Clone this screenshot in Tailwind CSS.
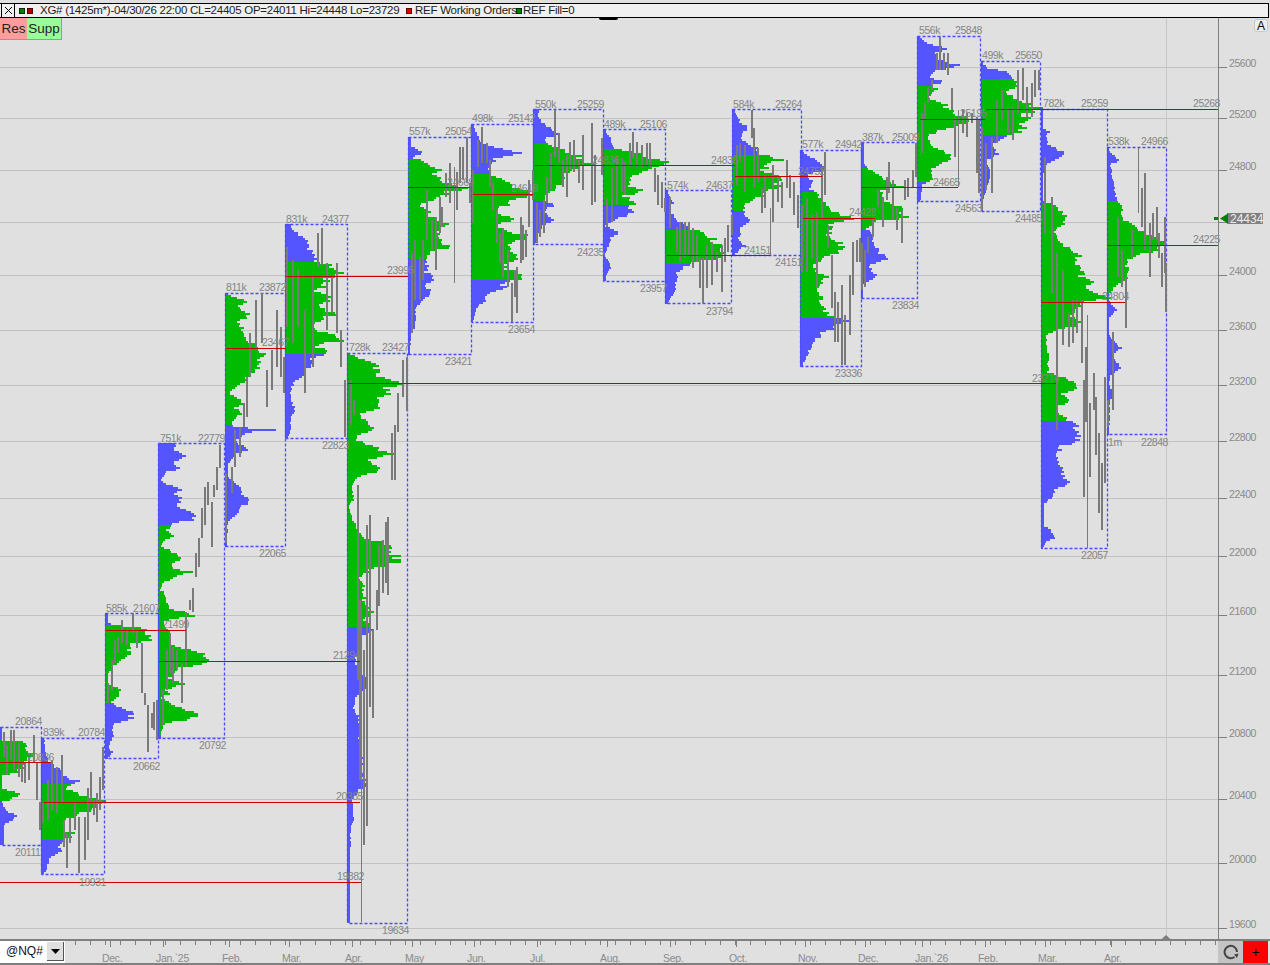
<!DOCTYPE html>
<html lang="en">
<head>
<meta charset="UTF-8">
<title>XG# chart</title>
<script src="https://cdn.jsdelivr.net/npm/@tailwindcss/browser@4"></script>
</head>
<body class="bg-[#e0e0e0] font-['Liberation_Sans',sans-serif]">
<div class="relative w-[1270px] h-[965px] overflow-hidden flex flex-col">

  <!-- title bar -->
  <div class="shrink-0 mt-[3px] h-[15px] mr-px flex items-center border-y border-r border-black bg-[#f0f0f0] text-[11.5px] leading-none text-[#222] tracking-[-0.26px] whitespace-nowrap">
    <div class="ml-px w-[14px] h-full border-x border-black flex items-center justify-center">
      <svg viewBox="0 0 9 9" class="w-[9px] h-[9px] stroke-black fill-none"><path d="M1 1L8 8M8 1L1 8"/></svg>
    </div>
    <span class="ml-[4px] w-[6px] h-[6px] bg-[#008000] border border-[#003000]"></span>
    <span class="ml-[2px] w-[6px] h-[6px] bg-[#b00000] border border-[#500000]"></span>
    <span class="ml-[7px] w-[366px]">XG# (1425m*)-04/30/26 22:00 CL=24405 OP=24011 Hi=24448 Lo=23729</span>
    <span class="w-[6px] h-[6px] bg-[#e00000] border border-[#700000]"></span>
    <span class="ml-[3px] w-[101px]">REF Working Orders</span>
    <span class="w-[6px] h-[6px] bg-[#008000] border border-[#003000]"></span>
    <span class="ml-px">REF Fill=0</span>
  </div>

  <!-- chart canvas -->
  <svg id="chart" class="block w-[1270px] h-[922px] shrink-0" viewBox="0 18 1270 922">
    <path id="grid" class="stroke-[#c2c2c2] fill-none" shape-rendering="crispEdges"/>
    <path d="M1166.5 18V938" class="stroke-[#c6c6c6] fill-none" shape-rendering="crispEdges"/>
    <path id="blue" class="fill-[#5555ff]" shape-rendering="crispEdges"/>
    <path id="green" class="fill-[#00bb00]" shape-rendering="crispEdges"/>
    <path id="boxes" class="stroke-[#4a4aff] fill-none" stroke-width="1.3" stroke-dasharray="3 2"/>
    <path id="bars" class="stroke-[#7a7a7a] fill-none" stroke-width="2" shape-rendering="crispEdges"/>
    <path id="thin" class="stroke-[#7a7a7a] fill-none" stroke-width="1" shape-rendering="crispEdges"/>
    <path id="poc" class="stroke-[#c80000] fill-none" shape-rendering="crispEdges"/>

    <!-- price axis -->
    <path d="M1218.5 18V940" class="stroke-[#808080] fill-none" shape-rendering="crispEdges"/>
    <path id="priceTicks" class="stroke-[#808080] fill-none" shape-rendering="crispEdges"/>
    <g class="fill-[#8a8a8a] text-[10.5px] tracking-[-0.45px]">
      <text x="1229" y="67">25600</text><text x="1229" y="118">25200</text><text x="1229" y="170">24800</text>
      <text x="1229" y="275">24000</text><text x="1229" y="330">23600</text><text x="1229" y="385">23200</text>
      <text x="1229" y="441">22800</text><text x="1229" y="498">22400</text><text x="1229" y="556">22000</text>
      <text x="1229" y="615">21600</text><text x="1229" y="675">21200</text><text x="1229" y="737">20800</text>
      <text x="1229" y="799">20400</text><text x="1229" y="863">20000</text><text x="1229" y="928">19600</text>
    </g>
    <rect x="1227" y="213" width="36" height="11" class="fill-[#808080]"/>
    <text x="1230" y="223" class="fill-[#eeeeee] text-[12px]">24434</text>
    <path d="M1214 217h4v3h-4zM1220 218.500l8-5v10z" class="fill-[#008000]"/>

    <!-- profile labels -->
    <g class="fill-[#858585] text-[10.5px] tracking-[-0.45px]">
      <text x="15" y="725">20864</text><text x="15" y="856">20111</text><text x="27" y="761">20836</text>
      <text x="43" y="736">839k</text><text x="78" y="736">20784</text><text x="79" y="886">19931</text>
      <text x="106" y="612">585k</text><text x="133" y="612">21607</text><text x="133" y="770">20662</text><text x="162" y="628">21499</text>
      <text x="160" y="442">751k</text><text x="198" y="442">22779</text><text x="199" y="749">20792</text>
      <text x="226" y="291">811k</text><text x="259" y="291">23872</text><text x="259" y="557">22065</text><text x="262" y="346">23467</text>
      <text x="286" y="223">831k</text><text x="322" y="223">24377</text><text x="322" y="449">22823</text>
      <text x="349" y="351">728k</text><text x="382" y="351">23427</text><text x="382" y="934">19634</text>
      <text x="333" y="659">21294</text><text x="336" y="800">20385</text><text x="337" y="880">19882</text>
      <text x="409" y="135">557k</text><text x="445" y="135">25054</text><text x="445" y="365">23421</text><text x="387" y="274">23995</text><text x="447" y="186">24669</text>
      <text x="472" y="122">498k</text><text x="508" y="122">25142</text><text x="508" y="333">23654</text><text x="511" y="192">24618</text>
      <text x="535" y="108">550k</text><text x="577" y="108">25259</text><text x="577" y="256">24235</text><text x="592" y="164">24836</text>
      <text x="604" y="128">489k</text><text x="640" y="128">25106</text><text x="640" y="292">23957</text><text x="711" y="164">24836</text>
      <text x="667" y="189">574k</text><text x="706" y="189">24637</text><text x="706" y="315">23794</text><text x="744" y="254">24151</text>
      <text x="733" y="108">584k</text><text x="775" y="108">25264</text><text x="775" y="266">24151</text><text x="798" y="175">24752</text>
      <text x="802" y="148">577k</text><text x="835" y="148">24942</text><text x="835" y="377">23336</text><text x="849" y="216">24428</text>
      <text x="862" y="141">387k</text><text x="892" y="141">25009</text><text x="892" y="309">23834</text><text x="933" y="186">24665</text>
      <text x="919" y="34">556k</text><text x="955" y="34">25848</text><text x="955" y="212">24563</text><text x="960" y="117">25195</text>
      <text x="982" y="59">499k</text><text x="1015" y="59">25650</text><text x="1015" y="222">24485</text>
      <text x="1043" y="107">782k</text><text x="1081" y="107">25259</text><text x="1193" y="107">25268</text><text x="1081" y="559">22057</text><text x="1032" y="382">23214</text><text x="1102" y="300">24804</text>
      <text x="1108" y="145">538k</text><text x="1141" y="145">24966</text><text x="1141" y="446">22848</text><text x="1108" y="446">1m</text><text x="1193" y="243">24225</text>
    </g>
    <path d="M1160.500 940l5.500-5 5.500 5z" class="fill-[#808080]"/>
  </svg>

  <!-- Res / Supp buttons -->
  <div class="absolute left-0 top-[18px] flex text-[13.5px] leading-[21px] text-[#222]">
    <span class="w-[27px] h-[22px] bg-[#ff9c9c] text-center border-b border-[#999]">Res</span>
    <span class="w-[35px] h-[22px] bg-[#98ff98] text-center border-b border-r border-[#999]">Supp</span>
  </div>
  <div class="absolute left-[1254px] top-[19px] w-[14px] h-[13px] rounded-[3px] border border-[#c8c8c8] bg-[#eeeeee] text-black text-[12px] leading-[12px] text-center">A</div>
  <div class="absolute left-[599px] top-[18px] w-[19px] h-[2px] rounded-b-sm bg-black"></div>

  <!-- bottom strip: symbol box, time axis, buttons -->
  <div class="shrink-0 h-[26px] -mt-px flex border-t-2 border-b-2 border-[#808080] w-[1270px]">
    <div class="w-[65px] h-full flex bg-white p-px">
      <span class="flex-1 text-[12px] leading-[19px] pl-[5px] text-[#111]">@NQ#</span>
      <span class="w-[17px] h-[19px] bg-[#e0e0e0] border-r border-b border-[#555] flex items-center justify-center">
        <svg viewBox="0 0 9 5" class="w-[9px] h-[5px] fill-black"><path d="M0 0h9L4.500 5z"/></svg>
      </span>
    </div>
    <svg id="timeAxis" class="block w-[1153px] h-full" viewBox="65 941 1153 22">
      <path id="timeTicks" class="stroke-[#808080] fill-none" shape-rendering="crispEdges"/>
      <g class="fill-[#8a8a8a] text-[10.5px] tracking-[-0.3px]">
        <text x="102" y="962">Dec.</text><text x="156" y="962">Jan.`25</text><text x="222" y="962">Feb.</text>
        <text x="282" y="962">Mar.</text><text x="345" y="962">Apr.</text><text x="405" y="962">May</text>
        <text x="467" y="962">Jun.</text><text x="530" y="962">Jul.</text><text x="600" y="962">Aug.</text>
        <text x="663" y="962">Sep.</text><text x="729" y="962">Oct.</text><text x="798" y="962">Nov.</text>
        <text x="858" y="962">Dec.</text><text x="915" y="962">Jan.`26</text><text x="978" y="962">Feb.</text>
        <text x="1038" y="962">Mar.</text><text x="1104" y="962">Apr.</text>
      </g>
    </svg>
    <div class="w-[25px] h-full bg-[#c4c4c4] flex items-center justify-center">
      <svg viewBox="0 0 16 16" class="w-[16px] h-[16px] fill-none stroke-[#444]" stroke-width="2"><path d="M11.500 13A6.200 6.200 0 1 1 14 8"/><path d="M11 10.500l3 3.500 1.500-4.500z" class="fill-[#444] stroke-none"/></svg>
    </div>
    <div class="w-[25px] h-full bg-[#ff0000] flex items-center justify-center text-black text-[14px] leading-none">+</div>
  </div>
</div>

<script>
// price levels on the axis, y in page pixels
var gridY = [67,118,170,222,275,330,385,441,498,556,615,675,737,799,863,928];
var d = '', t = '';
gridY.forEach(function (y) {
  d += 'M0 ' + (y + .5) + 'H1218';
  t += 'M1218 ' + (y + .5) + 'H1227';
});
document.getElementById('grid').setAttribute('d', d);
document.getElementById('priceTicks').setAttribute('d', t);

// volume profiles. s = list of [y offset, [zoomY, width, zoomY, width...], zoom factor]
var profiles = [
  {x:0, r:41, top:727, bot:845, g:[738,800], noBox:1, s:[[590,[450,2,452,22,470,26,490,32,510,28,530,22,548,14,552,2,595,2,598,10,610,18,625,12,632,2,660,6,670,16,685,14,700,4]]]},
  {x:41, r:104, top:738, bot:874, g:[783,839], s:[[590,[445,3,490,5,510,8,520,12,545,22,560,24,570,40,578,30,590,22,610,38,625,60,640,60,650,58,670,38,680,30,700,23,715,22,730,36,745,22,755,20,785,18,800,10,820,7,850,3]]]},
  {x:105, r:158, top:613, bot:758, g:[625,703], s:[[590,[70,3,98,3,100,8,115,42,130,42,150,42,160,22,190,25,215,12,250,3,280,3,295,18,320,12,335,5,345,12,355,23,380,28,400,8,440,8,470,3,485,8,500,3]]]},
  {x:158, r:224, top:443, bot:738, g:[524,735], s:[[430,[40,17,60,17,75,28,85,20,100,15,110,25,125,7,150,3,165,13,175,23,190,18,200,22,225,20,240,32,265,38,275,17,285,13,300,8,315,18,330,5,345,3,360,13,380,23,400,13,415,17,420,37,440,17,455,5,480,2,500,3,525,10,540,23,555,38,565,17]],[590,[0,5,50,11,75,37,90,5,130,12,160,14,180,34,205,54,215,44,235,18,260,11,280,26,295,8,310,11,320,3,340,14,355,25,370,38,385,34,395,8,420,3,445,3]]]},
  {x:225, r:285, top:293, bot:546, g:[295,425], s:[[210,[250,3,255,7,270,23,285,13,300,18,310,27,330,13,350,17,375,17,395,27,415,37,440,35,470,35,490,27,510,20,525,13,545,3,560,12,575,20,590,10,605,17,630,8,645,8,650,20,657,45,665,20,690,10,715,22,730,10,760,3,800,3,830,17,860,20,875,27,885,17,910,13,930,3,1000,2]]]},
  {x:285, r:347, top:224, bot:438, g:[262,354], s:[[210,[45,5,70,13,95,22,125,25,150,32,160,40,175,50,190,60,200,43,240,33,260,50,280,33,310,47,330,33,350,30,375,47,390,53,405,30,420,40,430,48,440,27,465,25,485,20,510,10,540,5,575,7,600,10,625,5,650,6,680,3]]]},
  {x:347, r:407, top:353, bot:923, g:[353,627], s:[[210,[430,3,435,8,460,27,480,32,495,27,510,43,520,53,530,40,550,42,570,27,590,35,605,10,640,13,660,25,675,8,690,10,705,20,720,33,735,48,755,17,775,33,790,17,810,5,850,2,925,2,950,13,990,23,1010,43]],[400,[0,33,20,33,40,12,90,27,100,10,115,8,135,27,150,40,160,43,175,20,205,33,225,10,250,5,290,7,310,2,345,5,375,10,405,17,425,42,460,49,475,49,500,23,525,12,550,17,600,17,625,25,650,17,665,28,680,25,700,13,745,13,770,7,810,17,825,20,860,15,880,8,910,7,940,12,980,13,1020,12,1060,15,1100,13,1135,22,1150,12,1180,5,1230,7,1280,3,1310,4,1330,3,1548,3],2.958]]},
  {x:408, r:471, top:137, bot:354, g:[158,259], s:[[100,[115,3,135,3,155,15,170,5,180,15,200,23,205,33,220,25,240,35,260,60,275,37,290,33,310,12,330,20,350,23,370,37,395,30,420,33,437,42,450,27,470,17,485,20,510,17,530,27,555,17,570,25,590,17,620,8,660,7,680,8,700,3,760,2]]]},
  {x:471, r:533, top:124, bot:322, g:[173,279], s:[[100,[75,3,115,8,135,18,150,43,160,53,170,27,190,20,210,17,225,20,240,33,260,43,283,63,295,37,310,42,325,23,355,38,375,27,390,38,410,60,425,37,460,40,470,43,500,33,530,50,545,33,560,33,575,20,600,13,625,5,660,2]]]},
  {x:533, r:603, top:109, bot:244, g:[143,201], s:[[100,[35,5,60,8,90,20,100,30,115,10,135,17,165,46,190,60,220,30,250,27,280,15,300,10,310,23,330,10,355,20,375,10,400,5,430,2]]]},
  {x:603, r:665, top:129, bot:281, g:[148,205], s:[[95,[110,3,130,8,155,10,165,27,180,43,195,57,205,60,215,47,240,30,270,23,285,40,300,22,320,32,335,23,350,30,365,17,390,2,410,17,425,8,450,5,480,2,510,8,540,3]]]},
  {x:665, r:731, top:190, bot:303, g:[230,263], s:[[95,[290,3,320,8,340,3,380,15,395,23,415,43,430,47,445,53,460,63,480,63,495,37,510,20,530,12,555,12,580,10,610,5,620,3]]]},
  {x:732, r:801, top:109, bot:255, g:[154,210], s:[[95,[45,3,80,8,95,17,110,10,130,8,160,27,175,30,190,53,200,37,225,30,240,40,260,50,290,37,320,17,340,10,350,13,375,17,400,8,430,7,450,13,475,3]]]},
  {x:800, r:861, top:150, bot:366, g:[191,317], s:[[95,[170,3,200,20,215,27,240,7,260,13,280,10,295,18,325,25,345,30,360,43,370,58,385,30,420,30,440,40,460,43,480,30,505,13,530,17,545,27,570,17,600,20,630,22,660,32,672,47,690,37,710,23,740,13,780,7,810,2]]]},
  {x:861, r:917, top:142, bot:298, g:[167,229], s:[[20,[370,3,430,3,445,8,460,18,480,27,495,43,510,20,540,23,560,37,590,47,600,17,625,5,640,13,660,10,690,18,715,25,735,7,765,15,790,2,830,2]]]},
  {x:917, r:980, top:36, bot:201, g:[85,181], s:[[20,[50,3,70,13,85,30,100,17,120,25,135,43,150,20,170,13,185,27,195,12,205,20,230,10,250,27,265,32,280,42,300,53,320,37,330,20,345,12,365,13,385,20,405,35,425,27,445,13,475,17,490,5,510,5,540,3]]]},
  {x:981, r:1040, top:61, bot:211, g:[78,135], s:[[20,[125,2,140,5,160,33,172,35,185,33,200,37,215,27,240,37,260,55,275,47,300,43,320,45,340,33,350,27,370,10,400,17,420,3,450,10,480,8,510,5,540,2,570,2]]]},
  {x:1041, r:1107, top:109, bot:548, g:[203,421], s:[[0,[330,2,385,2,390,10,405,5,430,7,445,15,458,25,470,17,490,5,520,2,600,2,610,12,625,17,650,28,690,13,730,20,760,40,790,33,840,47,870,53,890,63,905,40,940,30]],[300,[20,33,45,30,70,40,85,17,100,5,130,5,160,8,190,7,215,7,230,23,245,33,260,40,280,20,295,33,315,17,340,17,355,28,370,33,400,38,420,40,435,20,455,17,490,17,510,22,530,23,550,28,565,13,585,12,610,3,630,3,675,3,690,10,710,13,725,5,745,2]]]},
  {x:1107, r:1166, top:147, bot:434, g:[201,292], s:[[0,[450,2,480,12,490,3,520,5,550,7,575,8,600,10,610,13,630,15,660,18,690,33,710,50,722,55,740,57,755,38,775,23,800,20,830,20,860,7,880,2,905,3,925,10,945,3]],[300,[25,10,50,2,100,2,125,8,140,15,160,5,185,10,205,13,225,3,250,2,280,7,300,3,400,2]]]}
];

// small fixed noise so rows look like real tape
var seed = 12345;
function rnd() { seed = (seed * 16807) % 2147483647; return seed / 2147483647; }

var bluePath = '', greenPath = '', boxPath = '';
profiles.forEach(function (p) {
  var pts = [];
  p.s.forEach(function (seg) {
    var z = seg[2] || 3;
    for (var i = 0; i < seg[1].length; i += 2) pts.push([seg[0] + seg[1][i] / z, seg[1][i + 1]]);
  });
  for (var y = p.top; y < p.bot; y += 2) {
    var w = pts[0][1];
    for (var k = 0; k < pts.length - 1; k++) {
      if (y >= pts[k][0] && y <= pts[k + 1][0]) {
        var f = (y - pts[k][0]) / (pts[k + 1][0] - pts[k][0]);
        w = pts[k][1] + (pts[k + 1][1] - pts[k][1]) * f;
      }
    }
    if (y > pts[pts.length - 1][0]) w = pts[pts.length - 1][1];
    if (y < pts[0][0]) w = pts[0][1];
    w = Math.max(1, Math.round(w * (0.86 + rnd() * 0.28)));
    var row = 'M' + p.x + ' ' + y + 'h' + w + 'v2h-' + w + 'z';
    if (y >= p.g[0] && y < p.g[1]) greenPath += row; else bluePath += row;
  }
  if (!p.noBox) boxPath += 'M' + (p.x + .5) + ' ' + (p.top + .5) + 'V' + (p.bot + .5);
  boxPath += 'M' + (p.x + .5) + ' ' + (p.top + .5) + 'H' + (p.r + .5) + 'V' + (p.bot + .5) + 'H' + (p.x + .5);
});
document.getElementById('blue').setAttribute('d', bluePath);
document.getElementById('green').setAttribute('d', greenPath);
document.getElementById('boxes').setAttribute('d', boxPath);

// price bars [x, high y, low y]
var bars = [
[4,732,757],[7,745,775],[11,730,760],[14,730,770],[19,743,777],[22,763,782],[25,763,783],[29,757,780],[34,735,763],[37,763,800],
[40,802,830],[43,803,823],[48,780,820],[52,760,810],[57,767,813],[62,755,803],[64,820,847],[67,833,868],[70,817,843],[75,803,830],[79,817,873],[85,817,860],[88,788,840],[91,772,803],[94,800,815],[97,793,822],[100,777,810],[103,747,790],
[108,683,703],[112,660,690],[115,640,663],[118,637,653],[122,620,643],[127,630,645],[133,613,633],[137,630,648],[142,643,693],[145,693,705],[148,705,752],[152,713,728],[154,702,730],[157,700,740],
[163,690,725],[167,650,690],[170,633,673],[173,647,683],[177,650,670],[182,663,703],[186,612,667],[190,600,610],[193,588,612],[196,553,577],[199,538,567],[202,508,538],[205,487,525],[208,482,505],[212,502,547],[214,485,497],[217,467,490],[220,445,468],
[226,473,543],[232,467,493],[235,430,467],[240,427,457],[244,403,427],[247,377,417],[250,333,377],[256,300,350],[262,293,343],[267,370,407],[272,350,390],[277,310,367],[281,327,377],[284,357,393],
[287,247,327],[293,260,343],[298,270,327],[305,310,393],[313,277,367],[318,233,267],[322,228,265],[327,263,330],[332,277,313],[337,263,333],[341,330,367],[345,380,437],
[351,380,425],[354,400,415],[358,485,680],[360,600,780],[364,650,845],[367,525,826],[370,515,707],[373,630,718],[377,590,630],[379,545,606],[383,540,593],[386,522,583],[388,517,595],[392,433,480],[395,425,480],[398,393,432],[403,360,397],[407,357,411],
[412,253,333],[415,240,300],[420,257,300],[423,240,280],[427,190,240],[432,220,250],[436,217,270],[440,197,233],[442,207,227],[446,173,197],[450,163,203],[457,172,210],[460,147,183],[463,147,180],[467,137,183],[470,183,203],
[473,170,223],[478,140,167],[482,127,163],[487,143,163],[490,160,187],[493,183,210],[497,210,243],[500,233,263],[503,228,277],[508,250,287],[512,283,322],[515,270,297],[517,267,313],[521,217,263],[523,225,260],[526,230,257],[529,180,227],[533,170,200],
[537,203,243],[540,210,237],[544,200,233],[547,177,203],[551,153,190],[555,110,157],[559,133,163],[563,160,187],[567,155,197],[570,142,170],[574,140,172],[579,160,183],[583,135,190],[592,123,205],[595,155,202],[602,138,175],
[607,198,227],[612,168,222],[617,158,205],[622,158,192],[625,162,195],[630,143,167],[633,132,158],[637,142,167],[642,145,168],[647,143,165],[650,143,167],[655,168,192],[658,175,205],[662,182,208],[665,198,212],
[670,197,228],[677,227,252],[680,222,262],[685,222,258],[689,222,255],[693,228,268],[697,235,262],[700,258,288],[703,258,303],[707,245,288],[712,242,285],[717,252,272],[722,245,292],[725,238,262],[728,225,252],[732,215,235],
[737,145,185],[740,143,162],[745,145,192],[752,110,138],[754,128,188],[758,148,182],[762,188,213],[765,175,208],[773,165,222],[778,175,202],[782,182,208],[787,160,188],[790,175,198],[794,182,215],[798,195,228],
[802,205,272],[807,198,272],[812,215,258],[817,212,288],[822,168,218],[825,152,195],[828,225,248],[832,255,308],[835,292,342],[838,302,342],[842,285,365],[845,315,365],[850,275,335],[853,242,295],[857,252,262],[860,238,262],
[853,247,277],[857,240,260],[862,243,290],[865,250,287],[868,237,253],[873,217,237],[878,190,207],[883,197,227],[887,177,200],[889,162,193],[893,180,220],[897,207,230],[902,210,243],[905,180,200],[908,178,197],[913,170,187],[916,143,177],
[922,113,153],[925,103,120],[928,87,103],[932,80,90],[937,53,70],[940,37,70],[944,53,70],[948,53,75],[952,88,110],[955,117,157],[963,110,133],[967,113,137],[972,113,123],[977,117,173],[979,120,193],
[982,127,210],[986,143,190],[992,137,193],[997,100,143],[1002,90,120],[1008,107,133],[1013,107,140],[1018,70,113],[1023,68,100],[1027,87,117],[1032,83,117],[1035,70,97],[1039,70,90],
[1045,157,233],[1052,197,293],[1057,253,430],[1063,270,345],[1069,313,347],[1073,300,343],[1077,300,333],[1082,300,363],[1086,347,422],[1084,380,497],[1090,403,477],[1094,373,410],[1096,397,455],[1099,433,513],[1102,463,530],[1105,377,483],[1108,400,427],
[1113,332,410],[1118,217,277],[1122,250,287],[1126,277,328],[1132,230,257],[1142,188,227],[1145,173,250],[1150,223,277],[1153,213,240],[1157,207,240],[1159,233,258],[1162,253,287],[1165,217,273],[1166,263,312]
];
var thin = [[361,606,922],[454,167,283],[770,208,255],[958,110,187],[1087,315,548],[1138,148,213]];
var b = '', th = '';
bars.forEach(function (r) { b += 'M' + r[0] + ' ' + r[1] + 'V' + r[2]; });
thin.forEach(function (r) { th += 'M' + (r[0] + .5) + ' ' + r[1] + 'V' + r[2]; });
document.getElementById('bars').setAttribute('d', b);
document.getElementById('thin').setAttribute('d', th);

// POC lines [x0, x1, y]
var poc = [[0,51,762],[44,360,802],[0,361,882],[106,186,630],[159,360,661],[226,286,348],[286,408,276],[473,533,194],[667,770,255],[803,875,218],[1041,1125,302],
  [348,1056,383],[408,470,187],[535,735,165],[735,822,176],[862,958,187],[920,985,119],[984,1218,109],[1108,1218,245]];
document.getElementById('poc').setAttribute('d', poc.map(function (l) { return 'M' + l[0] + ' ' + (l[2] + .5) + 'H' + l[1]; }).join(''));

// time axis ticks
var tt = '', months = [110,163,229,289,352,412,474,537,607,670,736,805,865,922,985,1045,1111];
for (var x = 75; x < 1218; x += 15) tt += 'M' + (x + .5) + ' 941V945';
months.forEach(function (m) { tt += 'M' + (m + .5) + ' 941V947'; });
document.getElementById('timeTicks').setAttribute('d', tt);
</script>
</body>
</html>
